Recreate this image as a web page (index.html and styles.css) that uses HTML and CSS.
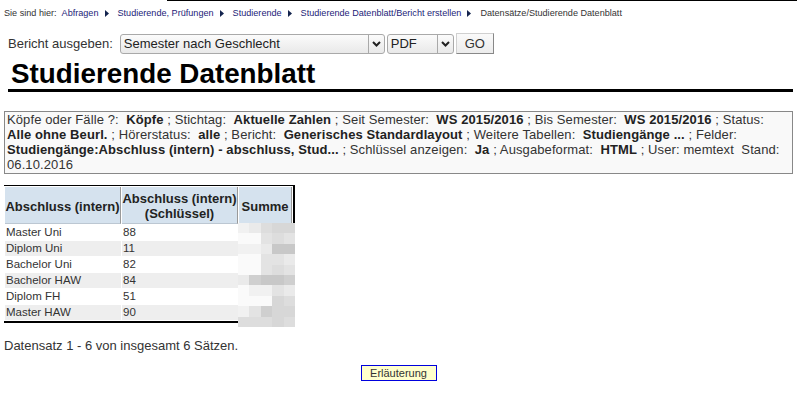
FILE: index.html
```html
<!DOCTYPE html>
<html lang="de">

<head>
    <meta charset="UTF-8">
    <meta name="viewport" content="width=device-width, initial-scale=1.0">
    <title>Studierende Datenblatt</title>
    <link rel="stylesheet" href="styles.css">
</head>

<body>
    <div class="topline"></div>

    <nav class="crumbs">
        <span class="here">Sie sind hier:</span>
        <a href="#">Abfragen</a>
        <svg class="arr" width="4" height="7" viewBox="0 0 4 7"><polygon points="0,0 4,3.5 0,7" /></svg>
        <a href="#">Studierende, Prüfungen</a>
        <svg class="arr" width="4" height="7" viewBox="0 0 4 7"><polygon points="0,0 4,3.5 0,7" /></svg>
        <a href="#">Studierende</a>
        <svg class="arr" width="4" height="7" viewBox="0 0 4 7"><polygon points="0,0 4,3.5 0,7" /></svg>
        <a href="#">Studierende Datenblatt/Bericht erstellen</a>
        <svg class="arr" width="4" height="7" viewBox="0 0 4 7"><polygon points="0,0 4,3.5 0,7" /></svg>
        <span class="current">Datensätze/Studierende Datenblatt</span>
    </nav>

    <form class="report">
        <label>Bericht ausgeben:</label>
        <div class="sel sel-wide">
            <span class="val">Semester nach Geschlecht</span>
            <span class="drop"><svg width="9" height="6" viewBox="0 0 9 6"><polyline points="1,1 4.5,4.5 8,1" /></svg></span>
        </div>
        <div class="sel sel-narrow">
            <span class="val">PDF</span>
            <span class="drop"><svg width="9" height="6" viewBox="0 0 9 6"><polyline points="1,1 4.5,4.5 8,1" /></svg></span>
        </div>
        <button type="button" class="go">GO</button>
    </form>

    <h1>Studierende Datenblatt</h1>

    <div class="params">
        Köpfe oder Fälle ?:&nbsp; <b>Köpfe</b> ; Stichtag:&nbsp; <b>Aktuelle Zahlen</b> ; Seit Semester:&nbsp; <b>WS 2015/2016</b> ; Bis Semester:&nbsp; <b>WS 2015/2016</b> ; Status:<br>
        <b>Alle ohne Beurl.</b> ; Hörerstatus:&nbsp; <b>alle</b> ; Bericht:&nbsp; <b>Generisches Standardlayout</b> ; Weitere Tabellen:&nbsp; <b>Studiengänge ...</b> ; Felder:<br>
        <b>Studiengänge:Abschluss (intern) - abschluss, Stud...</b> ; Schlüssel anzeigen:&nbsp; <b>Ja</b> ; Ausgabeformat:&nbsp; <b>HTML</b> ; User: memtext&nbsp; Stand:<br>
        06.10.2016
    </div>

    <div class="result">
        <table class="data">
            <thead>
                <tr>
                    <th class="c1">Abschluss (intern)</th>
                    <th class="c2">Abschluss (intern)<br>(Schlüssel)</th>
                    <th class="c3">Summe</th>
                </tr>
            </thead>
            <tbody>
                <tr><td>Master Uni</td><td>88</td><td></td></tr>
                <tr><td>Diplom Uni</td><td>11</td><td></td></tr>
                <tr><td>Bachelor Uni</td><td>82</td><td></td></tr>
                <tr><td>Bachelor HAW</td><td>84</td><td></td></tr>
                <tr><td>Diplom FH</td><td>51</td><td></td></tr>
                <tr><td>Master HAW</td><td>90</td><td></td></tr>
            </tbody>
        </table>

        <div class="mosaic">
            <i class="b"></i><i class="c"></i><i class="e"></i><i class="f"></i><i class="f"></i>
            <i class="a"></i><i class="a"></i><i class="d"></i><i class="e"></i><i class="d"></i>
            <i class="b"></i><i class="b"></i><i class="c"></i><i class="h"></i><i class="h"></i>
            <i class="a"></i><i class="a"></i><i class="d"></i><i class="d"></i><i class="c"></i>
            <i class="a"></i><i class="a"></i><i class="d"></i><i class="e"></i><i class="d"></i>
            <i class="c"></i><i class="g"></i><i class="h"></i><i class="h"></i><i class="g"></i>
            <i class="a"></i><i class="b"></i><i class="b"></i><i class="d"></i><i class="c"></i>
            <i class="a"></i><i class="a"></i><i class="a"></i><i class="f"></i><i class="e"></i>
            <i class="b"></i><i class="d"></i><i class="g"></i><i class="f"></i><i class="f"></i>
            <i class="e"></i><i class="e"></i><i class="e"></i><i class="f"></i><i class="e"></i>
        </div>
    </div>

    <p class="count">Datensatz 1 - 6 von insgesamt 6 Sätzen.</p>

    <div class="help">
        <button type="button">Erläuterung</button>
    </div>
</body>

</html>
```

FILE: styles.css
```css
body {
    font-family: "Liberation Sans", Arial, sans-serif;
    font-size: 13px;
    color: #222;
    margin: 0 4px;
    padding: 0;
    background-color: #fff;
}

.topline {
    height: 1px;
    margin-left: 163px;
    margin-right: -4px;
    background-color: #000;
}

/* breadcrumb */
.crumbs {
    display: flex;
    align-items: center;
    padding-top: 6px;
    height: 12px;
    line-height: 12px;
    font-size: 9.1px;
    color: #333;
    white-space: nowrap;
}

.crumbs .here {
    margin-right: 5px;
}

.crumbs a {
    color: #1c1c78;
    text-decoration: none;
}

.crumbs .arr {
    margin: 0 9px 0 6px;
    fill: #14244e;
}

/* report selector */
.report {
    display: flex;
    align-items: center;
    margin-top: 14px;
    height: 21px;
    padding-left: 4px;
}

.report label {
    color: #333;
    margin-right: 7px;
}

.sel {
    display: flex;
    height: 18px;
    border: 1px solid #a9a9a9;
    border-radius: 3px;
    background: linear-gradient(#fbfbfb, #e9e9e9);
    margin-right: 2px;
    color: #222;
}

.sel-wide {
    width: 263px;
}

.sel-narrow {
    width: 65px;
}

.sel .val {
    flex: 1;
    line-height: 18px;
    padding-left: 3px;
    font-size: 13px;
}

.sel .drop {
    display: flex;
    align-items: center;
    justify-content: center;
    width: 15px;
    border-left: 1px solid #a9a9a9;
}

.sel .drop polyline {
    fill: none;
    stroke: #222;
    stroke-width: 2;
}

.go {
    height: 21px;
    width: 38px;
    padding: 0;
    font-family: "Liberation Sans", Arial, sans-serif;
    font-size: 13px;
    color: #333;
    background: linear-gradient(#fafafa, #ececec);
    border: 1px solid #d0d0d0;
    border-right-color: #888;
    border-bottom-color: #888;
}

/* heading */
h1 {
    margin: 4px 4px 0;
    padding-left: 3px;
    font-size: 27.8px;
    line-height: 31px;
    color: #000;
    border-bottom: 3px solid #000;
}

.params {
    margin: 19px 4px 0 0;
    padding: 0 2px 1px;
    border: 1px solid #888;
    background-color: #f9f9f9;
    line-height: 15px;
    letter-spacing: 0.1px;
    white-space: nowrap;
    color: #333;
}

.params b {
    color: #222;
}

/* result table */
.result {
    position: relative;
    margin-top: 11px;
    margin-left: -1px;
}

.data {
    border-collapse: separate;
    border-spacing: 1px;
    border: 1px solid #000;
    border-left-color: #777;
    border-right-width: 2px;
    border-bottom-width: 2px;
}

.data th {
    background-color: #d5e2ee;
    border-right: 1px solid #999;
    border-bottom: 1px solid #bcc7d2;
    padding: 4px 0 2px;
    font-size: 13px;
    line-height: 15px;
    color: #222;
}

.data th.c1,
.data th.c2 {
    width: 115px;
}

.data th.c3 {
    width: 52px;
}

.data td {
    height: 15px;
    padding: 0 1px;
    font-size: 11.5px;
    line-height: 15px;
    color: #333;
}

.data tbody tr:nth-child(even) td {
    background-color: #eeeeee;
}

/* redacted sum column */
.mosaic {
    position: absolute;
    left: 235px;
    top: 38px;
    width: 57px;
    height: 104px;
    display: grid;
    grid-template-columns: repeat(5, 1fr);
    grid-template-rows: repeat(10, 1fr);
}

.mosaic .a { background-color: #fafafa; }
.mosaic .b { background-color: #f1f1f1; }
.mosaic .c { background-color: #eaeaea; }
.mosaic .d { background-color: #e3e3e3; }
.mosaic .e { background-color: #dddddd; }
.mosaic .f { background-color: #d7d7d7; }
.mosaic .g { background-color: #cfcfcf; }
.mosaic .h { background-color: #c8c8c8; }

.count {
    margin: 15px 0 0;
    line-height: 15px;
    color: #333;
}

.help {
    text-align: center;
    margin-top: 12px;
}

.help button {
    height: 16px;
    width: 76px;
    margin-left: -4px;
    padding: 0;
    font-family: "Liberation Sans", Arial, sans-serif;
    font-size: 11px;
    color: #333;
    background-color: #ffffcc;
    border: 1px solid #0000dd;
}
```
